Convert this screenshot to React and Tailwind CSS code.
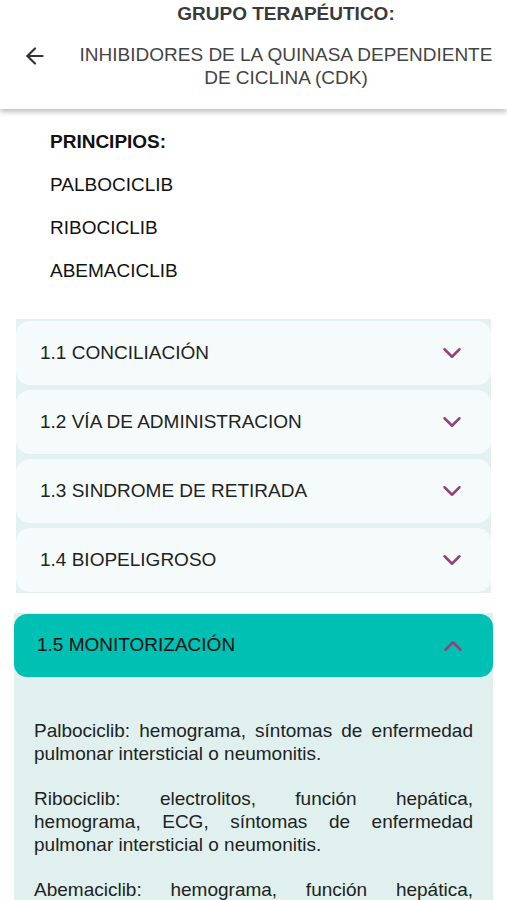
import { ArrowLeft, ChevronDown, ChevronUp } from "lucide-react";

const principios = ["PALBOCICLIB", "RIBOCICLIB", "ABEMACICLIB"];

const secciones = [
  "1.1 CONCILIACIÓN",
  "1.2 VÍA DE ADMINISTRACION",
  "1.3 SINDROME DE RETIRADA",
  "1.4 BIOPELIGROSO",
];

function Seccion({ titulo }) {
  return (
    <div className="flex h-[64px] items-center justify-between rounded-[14px] bg-[#f5fbfb] pl-6 pr-[24px]">
      <span className="text-[19px] text-[#222]">{titulo}</span>
      <ChevronDown size={30} strokeWidth={2} className="text-[#94407f]" />
    </div>
  );
}

export default function App() {
  return (
    <div
      className="min-h-screen bg-white"
      style={{ fontFamily: '"Liberation Sans", Arial, sans-serif' }}
    >
      {/* cabecera */}
      <div className="relative bg-white pb-[20px] shadow-[0_3px_5px_rgba(0,0,0,0.25)]">
        <div className="flex">
          <div className="w-[72px] shrink-0 pl-[22px] pt-[43px]">
            <ArrowLeft size={26} strokeWidth={2} className="text-[#333]" />
          </div>
          <div className="flex-1 pr-[7px] text-center">
            <h1 className="pt-[3px] text-[19px] font-bold leading-[22px] text-[#3a3a3a]">
              GRUPO TERAPÉUTICO:
            </h1>
            <p className="mt-[18px] text-[19px] leading-[23px] text-[#444]">
              INHIBIDORES DE LA QUINASA DEPENDIENTE DE CICLINA (CDK)
            </p>
          </div>
        </div>
      </div>

      {/* principios */}
      <div className="px-[50px] pt-[22px]">
        <h2 className="text-[19px] font-bold leading-[22px] text-[#111]">PRINCIPIOS:</h2>
        {principios.map((p) => (
          <p key={p} className="mt-[21px] text-[19px] leading-[22px] text-[#111]">
            {p}
          </p>
        ))}
      </div>

      {/* secciones cerradas */}
      <div className="mx-4 mt-[37px] flex flex-col gap-[5px] bg-[#e3f1f0] pt-[2px] pb-[1px]">
        {secciones.map((s) => (
          <Seccion key={s} titulo={s} />
        ))}
      </div>

      {/* sección abierta */}
      <div className="mx-[14px] mt-[20px] bg-[#dff0ee] pt-[1px]">
        <div className="flex h-[63px] items-center justify-between rounded-[13px] bg-[#00bfb3] pl-[23px] pr-[25px]">
          <span className="text-[19px] text-[#111]">1.5 MONITORIZACIÓN</span>
          <ChevronUp size={30} strokeWidth={2} className="text-[#94407f]" />
        </div>
        <div className="px-[20px] pt-[42px] pb-6 text-justify text-[19px] leading-[23px] text-[#222]">
          <p>Palbociclib: hemograma, síntomas de enfermedad pulmonar intersticial o neumonitis.</p>
          <p className="mt-[22px]">
            Ribociclib: electrolitos, función hepática, hemograma, ECG, síntomas de enfermedad pulmonar intersticial o neumonitis.
          </p>
          <p className="mt-[22px]">
            Abemaciclib: hemograma, función hepática, síntomas de enfermedad pulmonar intersticial o neumonitis, diarrea.
          </p>
        </div>
      </div>
    </div>
  );
}
